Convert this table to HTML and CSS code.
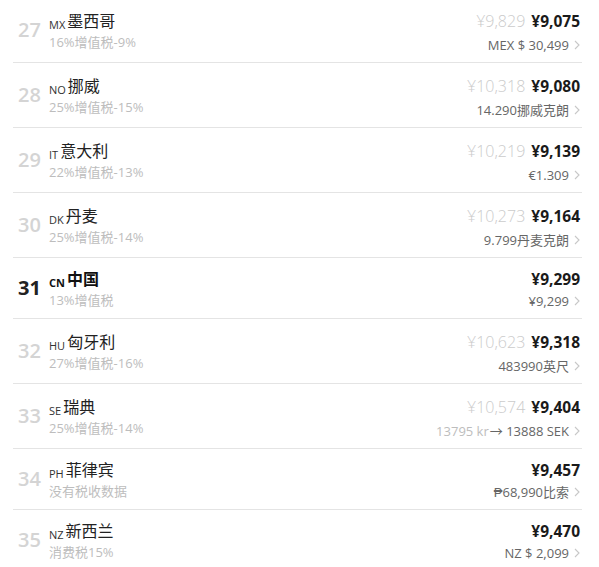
FILE: index.html
```html
<!DOCTYPE html>
<html lang="zh-CN">
<head>
<meta charset="utf-8">
<link rel="stylesheet" href="styles.css">
</head>
<body>
<ul class="list">
  <li class="row">
    <div class="left"><span class="rank">27</span><div class="info"><div class="name"><span class="code">MX</span>墨西哥</div><div class="tax">16%增值税-9%</div></div></div>
    <div class="right"><div class="prices has-old"><span class="old">¥9,829</span><span class="now">¥9,075</span></div><div class="local">MEX $ 30,499<svg class="chev" viewBox="0 0 6 10"><path d="M1 1l4 4-4 4"/></svg></div></div>
  </li>
  <li class="row">
    <div class="left"><span class="rank">28</span><div class="info"><div class="name"><span class="code">NO</span>挪威</div><div class="tax">25%增值税-15%</div></div></div>
    <div class="right"><div class="prices has-old"><span class="old">¥10,318</span><span class="now">¥9,080</span></div><div class="local">14.290挪威克朗<svg class="chev" viewBox="0 0 6 10"><path d="M1 1l4 4-4 4"/></svg></div></div>
  </li>
  <li class="row">
    <div class="left"><span class="rank">29</span><div class="info"><div class="name"><span class="code">IT</span>意大利</div><div class="tax">22%增值税-13%</div></div></div>
    <div class="right"><div class="prices has-old"><span class="old">¥10,219</span><span class="now">¥9,139</span></div><div class="local">€1.309<svg class="chev" viewBox="0 0 6 10"><path d="M1 1l4 4-4 4"/></svg></div></div>
  </li>
  <li class="row">
    <div class="left"><span class="rank">30</span><div class="info"><div class="name"><span class="code">DK</span>丹麦</div><div class="tax">25%增值税-14%</div></div></div>
    <div class="right"><div class="prices has-old"><span class="old">¥10,273</span><span class="now">¥9,164</span></div><div class="local">9.799丹麦克朗<svg class="chev" viewBox="0 0 6 10"><path d="M1 1l4 4-4 4"/></svg></div></div>
  </li>
  <li class="row current">
    <div class="left"><span class="rank">31</span><div class="info"><div class="name"><span class="code">CN</span>中国</div><div class="tax">13%增值税</div></div></div>
    <div class="right"><div class="prices"><span class="now">¥9,299</span></div><div class="local">¥9,299<svg class="chev" viewBox="0 0 6 10"><path d="M1 1l4 4-4 4"/></svg></div></div>
  </li>
  <li class="row">
    <div class="left"><span class="rank">32</span><div class="info"><div class="name"><span class="code">HU</span>匈牙利</div><div class="tax">27%增值税-16%</div></div></div>
    <div class="right"><div class="prices has-old"><span class="old">¥10,623</span><span class="now">¥9,318</span></div><div class="local">483990英尺<svg class="chev" viewBox="0 0 6 10"><path d="M1 1l4 4-4 4"/></svg></div></div>
  </li>
  <li class="row">
    <div class="left"><span class="rank">33</span><div class="info"><div class="name"><span class="code">SE</span>瑞典</div><div class="tax">25%增值税-14%</div></div></div>
    <div class="right"><div class="prices has-old"><span class="old">¥10,574</span><span class="now">¥9,404</span></div><div class="local"><span class="was">13795 kr</span>→ 13888 SEK<svg class="chev" viewBox="0 0 6 10"><path d="M1 1l4 4-4 4"/></svg></div></div>
  </li>
  <li class="row">
    <div class="left"><span class="rank">34</span><div class="info"><div class="name"><span class="code">PH</span>菲律宾</div><div class="tax">没有税收数据</div></div></div>
    <div class="right"><div class="prices"><span class="now">¥9,457</span></div><div class="local">₱68,990比索<svg class="chev" viewBox="0 0 6 10"><path d="M1 1l4 4-4 4"/></svg></div></div>
  </li>
  <li class="row">
    <div class="left"><span class="rank">35</span><div class="info"><div class="name"><span class="code">NZ</span>新西兰</div><div class="tax">消费税15%</div></div></div>
    <div class="right"><div class="prices"><span class="now">¥9,470</span></div><div class="local">NZ $ 2,099<svg class="chev" viewBox="0 0 6 10"><path d="M1 1l4 4-4 4"/></svg></div></div>
  </li>
</ul>
</body>
</html>
```
FILE: styles.css
```css
html, body {
  margin: 0;
  padding: 0;
  background: #fff;
}
body {
  font-family: "Open Sans", "Noto Sans CJK SC", sans-serif;
  color: #222;
  overflow: hidden;
}
.list {
  list-style: none;
  margin: -2px 17px 0 13px;
  padding: 0;
}
.row {
  display: flex;
  align-items: center;
  justify-content: space-between;
  padding: 10px 2px 10px 0;
  border-bottom: 1px solid #e4e4e4;
}
.left {
  display: flex;
  align-items: center;
}
.rank {
  width: 31px;
  padding-left: 5px;
  font-size: 20px;
  font-weight: 600;
  line-height: 1;
  color: #d4d4d4;
}
.info {
  display: flex;
  flex-direction: column;
}
.name {
  height: 22px;
  font-size: 16px;
  line-height: 22px;
  color: #222;
}
.code {
  font-size: 11px;
  line-height: 11px;
  margin-right: 2px;
  vertical-align: -2px;
  color: #333;
}
.tax {
  height: 16px;
  padding-top: 2px;
  font-size: 13px;
  line-height: 16px;
  color: #bdbdbd;
}
.current .rank {
  color: #222;
  font-weight: 700;
}
.current .name,
.current .code {
  font-weight: 700;
  color: #111;
}
.right {
  display: flex;
  flex-direction: column;
  align-items: flex-end;
}
.prices {
  line-height: 22px;
  font-size: 15.5px;
}
.old {
  font-size: 16px;
  line-height: 26px;
  font-weight: 300;
  color: #cbcbcb;
  margin-right: 6px;
}
.now {
  font-weight: 700;
  color: #1a1a1a;
}
.local {
  display: flex;
  align-items: center;
  height: 14px;
  padding-top: 4px;
  font-size: 13px;
  line-height: 14px;
  color: #666;
}
.was {
  color: #bdbdbd;
  margin-right: 1px;
}
.chev {
  width: 6px;
  height: 10px;
  margin-left: 5px;
  fill: none;
  stroke: #c8c8c8;
  stroke-width: 1.1;
}
```
